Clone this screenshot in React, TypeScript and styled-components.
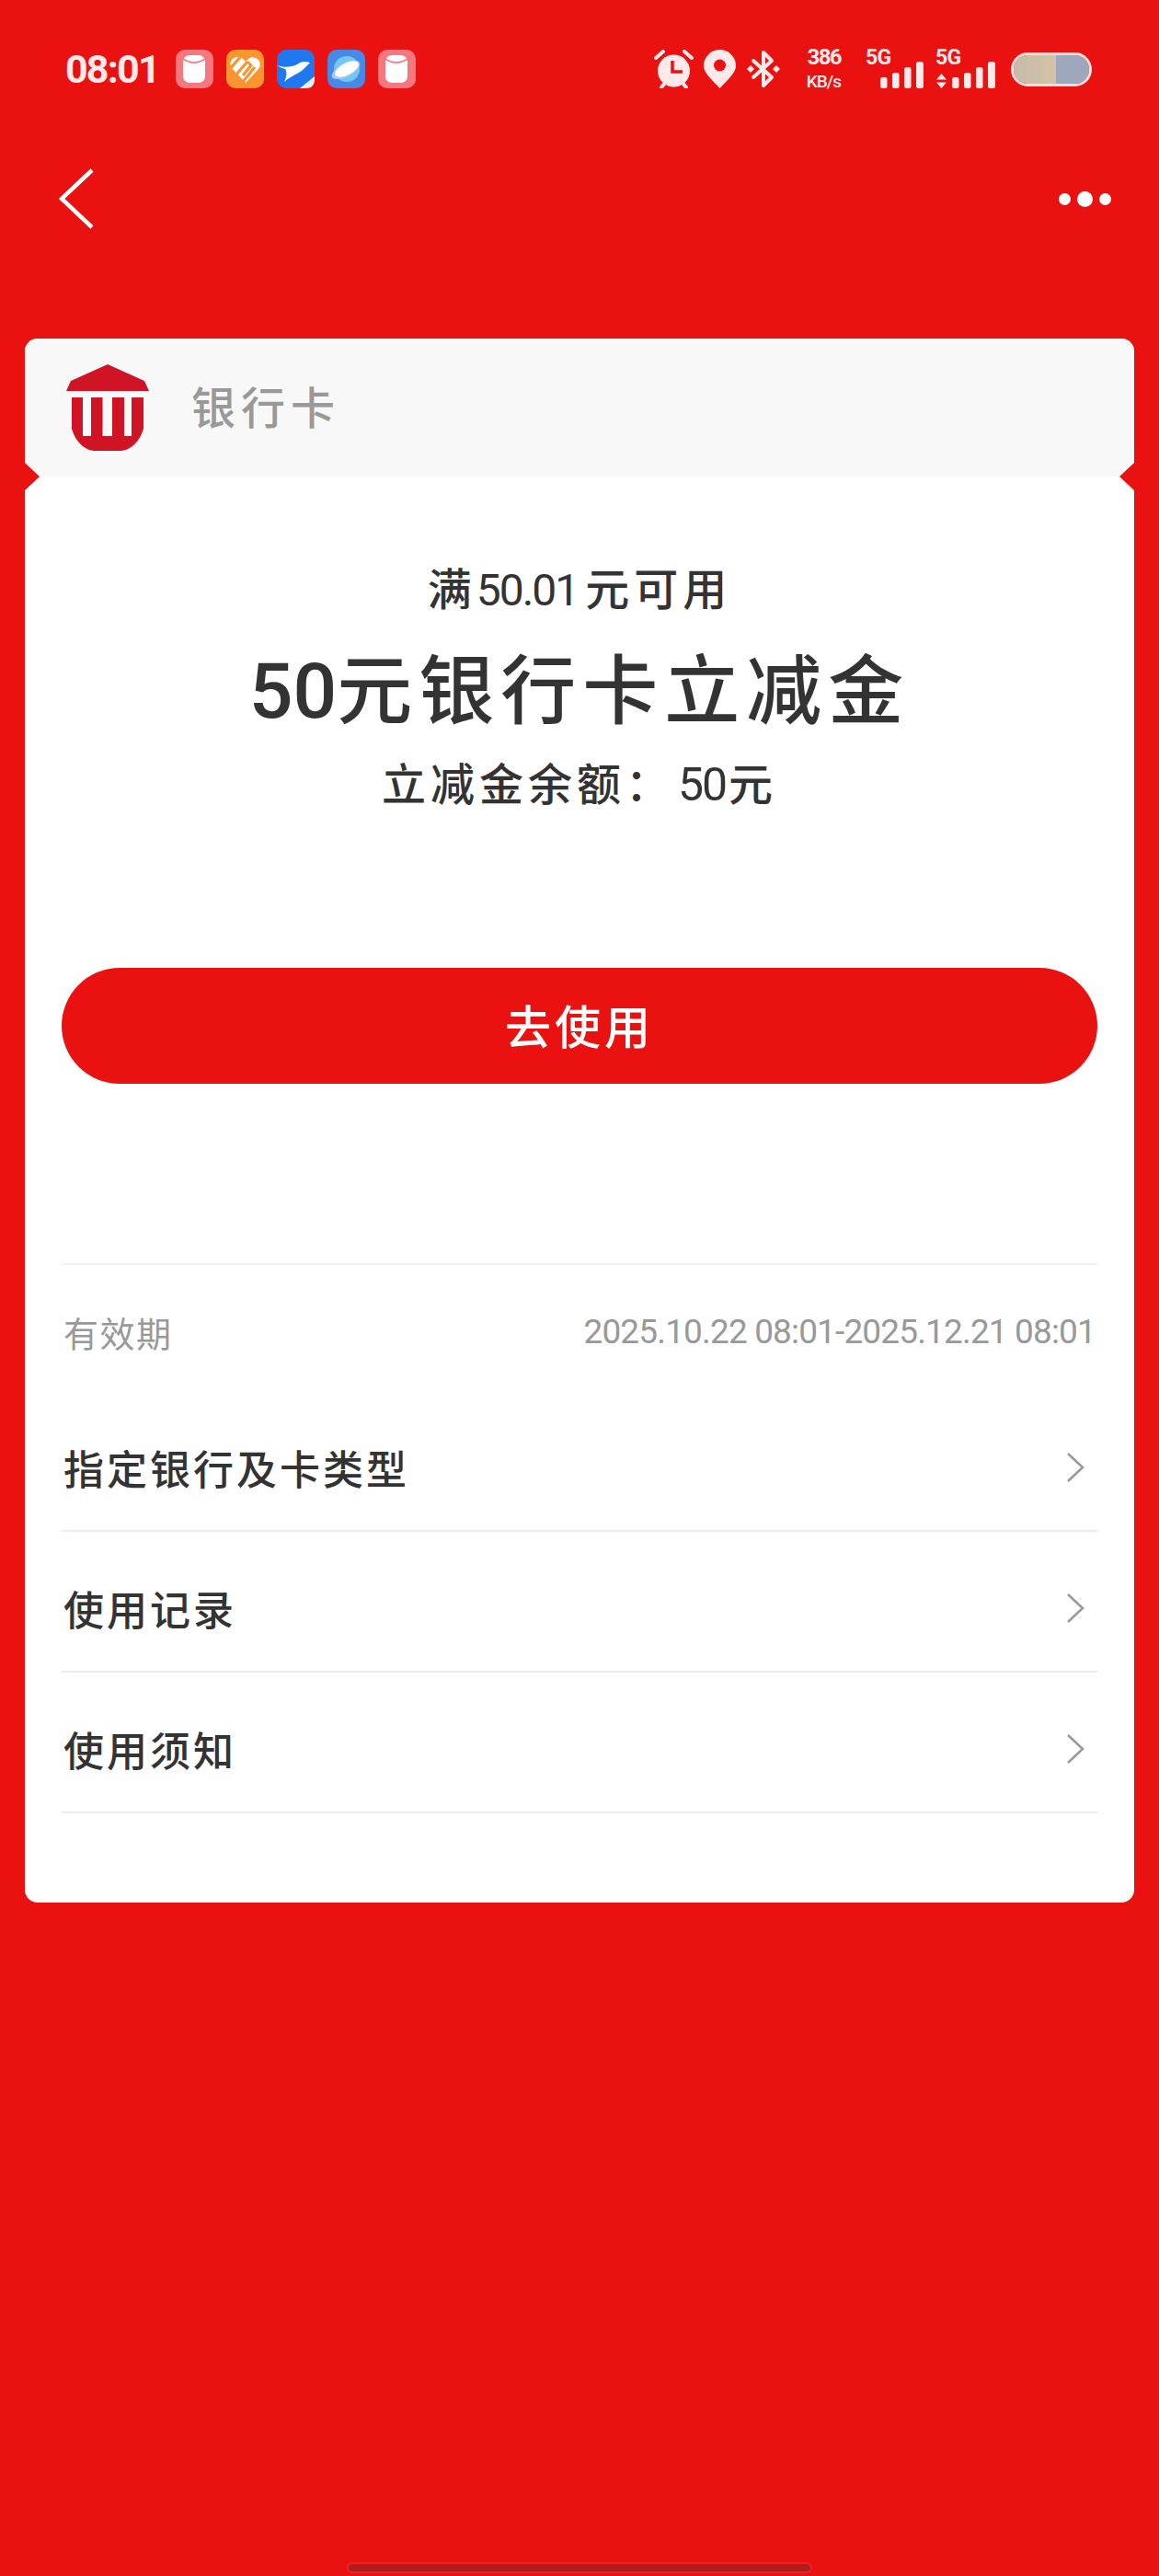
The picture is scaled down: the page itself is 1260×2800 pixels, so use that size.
import React from "react";
import styled, { createGlobalStyle } from "styled-components";

const RED = "#e91210";
const CJK = `Roboto, "Noto Sans CJK SC", sans-serif`;

const Global = createGlobalStyle`
  html, body { margin: 0; padding: 0; background: ${RED}; }
  * { box-sizing: border-box; }
`;

const Page = styled.div`
  width: 1260px;
  height: 2800px;
  background: ${RED};
  display: flex;
  flex-direction: column;
  font-family: ${CJK};
  overflow: hidden;
`;

const StatusBar = styled.div`
  height: 150px;
  padding: 0 73px 0 71px;
  display: flex;
  align-items: center;
  justify-content: space-between;
  color: #ffe9e9;
`;
const StatusLeft = styled.div`
  display: flex;
  align-items: center;
`;
const Time = styled.span`
  width: 97px;
  margin-right: 23px;
  font-size: 43px;
  line-height: 42px;
  font-weight: 700;
  letter-spacing: -1.8px;
  white-space: nowrap;
`;
const AppIcons = styled.div`
  display: flex;
  gap: 14px;
`;
const StatusRight = styled.div`
  display: flex;
  align-items: center;
  height: 42px;
`;
const StatusGlyph = styled.svg<{ $gap: number }>`
  display: block;
  margin-right: ${(p) => p.$gap}px;
  flex: none;
`;
const Speed = styled.div`
  width: 39px;
  height: 44px;
  margin-right: 27px;
  display: flex;
  flex-direction: column;
  align-items: flex-end;
  justify-content: space-between;
`;
const SpeedValue = styled.span`
  font-size: 24px;
  line-height: 18px;
  font-weight: 700;
  letter-spacing: -1.6px;
`;
const SpeedUnit = styled.span`
  font-size: 19px;
  line-height: 16px;
  font-weight: 500;
  letter-spacing: -1px;
`;
const Signal = styled.div<{ $gap: number }>`
  height: 42px;
  margin-right: ${(p) => p.$gap}px;
  display: flex;
  align-items: flex-end;
`;
const SignalSide = styled.div<{ $overlap: number }>`
  height: 42px;
  width: 28px;
  margin-right: ${(p) => p.$overlap}px;
  display: flex;
  flex-direction: column;
  justify-content: space-between;
`;
const SignalLabel = styled.span`
  font-size: 23px;
  line-height: 18px;
  font-weight: 700;
  letter-spacing: -0.8px;
`;
const Battery = styled.div`
  width: 88px;
  height: 37px;
  border: 3px solid #ffdcdc;
  border-radius: 19px;
  overflow: hidden;
  display: flex;
`;
const BatteryUsed = styled.div`
  width: 46px;
  background: linear-gradient(90deg, #c6bcaa, #d2c2a6);
`;
const BatteryFree = styled.div`
  flex: 1;
  background: #9ea8bd;
`;

const Nav = styled.div`
  height: 132px;
  padding: 0 52px 0 63px;
  display: flex;
  align-items: center;
  justify-content: space-between;
`;
const Dots = styled.div`
  display: flex;
  align-items: center;
  gap: 7px;
`;
const Dot = styled.span<{ $size: number }>`
  display: block;
  width: ${(p) => p.$size}px;
  height: ${(p) => p.$size}px;
  border-radius: 50%;
  background: #fff;
`;

const Card = styled.div`
  position: relative;
  width: 1206px;
  margin: 86px 0 0 27px;
  background: #fff;
  border-radius: 14px;
  overflow: hidden;
  padding-bottom: 97px;
`;
const Notch = styled.span<{ $side: "left" | "right" }>`
  position: absolute;
  top: 135px;
  ${(p) => p.$side}: 0;
  width: 0;
  height: 0;
  border-top: 15px solid transparent;
  border-bottom: 15px solid transparent;
  ${(p) => (p.$side === "left" ? "border-left" : "border-right")}: 16px solid ${RED};
`;
const CardHeader = styled.div`
  height: 150px;
  padding-left: 45px;
  background: #f8f8f9;
  display: flex;
  align-items: center;
  gap: 46px;
`;
const HeaderTitle = styled.span`
  padding-top: 4px;
  font-size: 48px;
  letter-spacing: 6px;
  color: #999;
  font-weight: 500;
  line-height: 60px;
`;

const Offer = styled.div`
  padding-top: 94px;
  display: flex;
  flex-direction: column;
  align-items: center;
  color: #333;
`;
const Threshold = styled.div`
  font-size: 48px;
  line-height: 60px;
  letter-spacing: 5px;
  font-weight: 500;
`;
const ThresholdNumber = styled.span`
  letter-spacing: -2px;
  margin-right: 8px;
  font-weight: 400;
`;
const OfferTitle = styled.div`
  margin-top: 30px;
  font-size: 82px;
  line-height: 100px;
  font-weight: 500;
  letter-spacing: 7px;
`;
const TitleNumber = styled.span`
  font-size: 84px;
  letter-spacing: 0;
`;
const Balance = styled.div`
  margin-top: 21px;
  font-size: 48px;
  line-height: 60px;
  letter-spacing: 5px;
  font-weight: 500;
`;
const BalanceNumber = styled.span`
  font-size: 50px;
  font-weight: 400;
  letter-spacing: -2px;
  margin: 0 3px 0 4px;
`;
const UseButton = styled.button`
  display: block;
  width: 1126px;
  height: 126px;
  margin: 168px auto 0;
  padding: 0 0 5px;
  border: 0;
  border-radius: 63px;
  background: ${RED};
  color: #fff;
  font-family: ${CJK};
  font-size: 50px;
  font-weight: 500;
  letter-spacing: 4px;
`;
const Details = styled.div`
  margin: 195px 40px 0;
  border-top: 2px solid #f1f1f1;
`;
const ValidityRow = styled.div`
  height: 137px;
  padding: 8px 2px 0;
  display: flex;
  align-items: center;
  justify-content: space-between;
  color: #999;
  font-size: 38px;
  letter-spacing: 1.5px;
`;
const ValidityDates = styled.span`
  font-size: 37px;
  letter-spacing: -0.85px;
`;
const LinkRow = styled.div`
  height: 153px;
  padding: 15px 14px 0 2px;
  display: flex;
  align-items: center;
  justify-content: space-between;
  border-bottom: 2px solid #ececec;
  color: #333;
  font-size: 44px;
  font-weight: 500;
  letter-spacing: 3px;
`;
const HomeBar = styled.div`
  margin: auto 0 3px 377px;
  width: 506px;
  height: 12px;
  border: 2px solid #e62525;
  border-radius: 6px;
  background: #b41c1c;
`;

const Cup = () => (
  <svg width="41" height="42" viewBox="0 0 41 42">
    <rect width="41" height="42" rx="10" fill="#f5787e" />
    <rect x="8" y="6" width="24" height="30" rx="7" fill="#fff" />
    <path d="M8 10Q20 18 32 10" fill="none" stroke="#f5787e" strokeWidth="1.6" />
  </svg>
);
const Heart = () => (
  <svg width="41" height="42" viewBox="0 0 41 42">
    <rect width="41" height="42" rx="10" fill="#fb9530" />
    <path d="M21 36L6 20C2 14 7 7 13 8C16 8 19 10 21 13C24 9 28 7 32 9C37 11 38 17 35 21Z" fill="#fff" />
    <path d="M4 21L16 7M10 28L23 13M18 35L31 19" stroke="#fb9530" strokeWidth="3.2" fill="none" />
    <path d="M23 13L27 17L18 28" stroke="#fb9530" strokeWidth="3" fill="none" />
  </svg>
);
const Bird = () => (
  <svg width="41" height="42" viewBox="0 0 41 42">
    <rect width="41" height="42" rx="10" fill="#1f78ee" />
    <path d="M0 17C8 20 16 19 22 16C26 13 30 12 36 14C32 18 28 23 22 26C17 29 12 31 8 35C11 29 11 24 9 21C6 20 3 19 0 17Z" fill="#fff" />
    <path d="M41 29V32C41 38 38 42 32 42H25Z" fill="#e6effb" />
  </svg>
);
const Planet = () => (
  <svg width="41" height="42" viewBox="0 0 41 42">
    <rect width="41" height="42" rx="10" fill="#4689e6" />
    <circle cx="21" cy="21" r="14" fill="#72c8f3" />
    <ellipse cx="20" cy="22" rx="17" ry="7" transform="rotate(-28 20 22)" fill="#a9c9f3" />
    <ellipse cx="21" cy="21" rx="14" ry="6.5" transform="rotate(-28 21 21)" fill="#fff" />
  </svg>
);

const Alarm = () => (
  <StatusGlyph $gap={10} width="45" height="42" viewBox="0 0 45 42">
    <circle cx="22.5" cy="23" r="17.5" fill="#ffe9e9" />
    <path d="M3 9L11 2M42 9L34 2M9 41L13 36M36 41L32 36" stroke="#ffe9e9" strokeWidth="4" strokeLinecap="round" />
    <path d="M21 12V24H32" stroke={RED} strokeWidth="3.5" fill="none" />
  </StatusGlyph>
);
const Pin = () => (
  <StatusGlyph $gap={12} width="35" height="42" viewBox="0 0 35 42">
    <path d="M17.5 42C6 30 0 24 0 17.5A17.5 17.5 0 0 1 35 17.5C35 24 29 30 17.5 42Z" fill="#ffe9e9" />
    <circle cx="17.5" cy="17" r="6.5" fill={RED} />
  </StatusGlyph>
);
const Bluetooth = () => (
  <StatusGlyph $gap={27} width="36" height="42" viewBox="0 0 36 42">
    <path d="M7 12L27 30L18 39V3L27 12L7 30" fill="none" stroke="#ffe9e9" strokeWidth="4" strokeLinejoin="round" strokeLinecap="round" />
    <path d="M4 17L8 21L4 25L0 21ZM32 17L36 21L32 25L28 21Z" fill="#ffe9e9" />
  </StatusGlyph>
);
const Bars = () => (
  <svg width="47" height="29" viewBox="0 0 47 29" style={{ display: "block", flex: "none" }}>
    <rect x="0" y="17" width="7.5" height="12" rx="2.5" fill="#ffe9e9" />
    <rect x="13" y="12" width="7.5" height="17" rx="2.5" fill="#ffe9e9" />
    <rect x="26" y="6" width="7.5" height="23" rx="2.5" fill="#ffe9e9" />
    <rect x="39" y="0" width="8" height="29" rx="2.5" fill="#ffe9e9" />
  </svg>
);
const Arrows = () => (
  <svg width="13" height="16" viewBox="0 0 13 16" style={{ display: "block" }}>
    <path d="M6.5 0L12 6.5H1ZM1 9.5H12L6.5 16Z" fill="#ffe9e9" />
  </svg>
);
const BackIcon = () => (
  <svg width="40" height="66" viewBox="0 0 40 66" style={{ display: "block" }}>
    <path d="M37 2L4 33L37 64" fill="none" stroke="#fff" strokeWidth="4.5" />
  </svg>
);
const BankLogo = () => (
  <svg width="90" height="94" viewBox="0 0 90 94" style={{ display: "block", flex: "none" }}>
    <path d="M45 0L85 18L90 29H0L5 18Z" fill="#cf1425" />
    <path d="M6 36H18V78H27V36H39.500V78H50V36H63V78H71V36H84V70C80 84 70 94 58 94H32C20 94 10 84 6 70Z" fill="#cf1425" />
  </svg>
);
const Chevron = () => (
  <svg width="20" height="32" viewBox="0 0 20 32" style={{ display: "block", flex: "none" }}>
    <path d="M2 1L18 16L2 31" fill="none" stroke="#9a9a9a" strokeWidth="2.6" />
  </svg>
);

export default function App() {
  const links = ["指定银行及卡类型", "使用记录", "使用须知"];
  return (
    <Page>
      <Global />
      <StatusBar>
        <StatusLeft>
          <Time>08:01</Time>
          <AppIcons>
            <Cup />
            <Heart />
            <Bird />
            <Planet />
            <Cup />
          </AppIcons>
        </StatusLeft>
        <StatusRight>
          <Alarm />
          <Pin />
          <Bluetooth />
          <Speed>
            <SpeedValue>386</SpeedValue>
            <SpeedUnit>KB/s</SpeedUnit>
          </Speed>
          <Signal $gap={13}>
            <SignalSide $overlap={-12}>
              <SignalLabel>5G</SignalLabel>
            </SignalSide>
            <Bars />
          </Signal>
          <Signal $gap={17}>
            <SignalSide $overlap={-10}>
              <SignalLabel>5G</SignalLabel>
              <Arrows />
            </SignalSide>
            <Bars />
          </Signal>
          <Battery>
            <BatteryUsed />
            <BatteryFree />
          </Battery>
        </StatusRight>
      </StatusBar>
      <Nav>
        <BackIcon />
        <Dots>
          <Dot $size={13} />
          <Dot $size={17} />
          <Dot $size={13} />
        </Dots>
      </Nav>
      <Card>
        <CardHeader>
          <BankLogo />
          <HeaderTitle>银行卡</HeaderTitle>
        </CardHeader>
        <Notch $side="left" />
        <Notch $side="right" />
        <Offer>
          <Threshold>
            满<ThresholdNumber>50.01</ThresholdNumber>元可用
          </Threshold>
          <OfferTitle>
            <TitleNumber>50</TitleNumber>元银行卡立减金
          </OfferTitle>
          <Balance>
            立减金余额：<BalanceNumber>50</BalanceNumber>元
          </Balance>
        </Offer>
        <UseButton>去使用</UseButton>
        <Details>
          <ValidityRow>
            <span>有效期</span>
            <ValidityDates>2025.10.22 08:01-2025.12.21 08:01</ValidityDates>
          </ValidityRow>
          {links.map((label) => (
            <LinkRow key={label}>
              <span>{label}</span>
              <Chevron />
            </LinkRow>
          ))}
        </Details>
      </Card>
      <HomeBar />
    </Page>
  );
}
